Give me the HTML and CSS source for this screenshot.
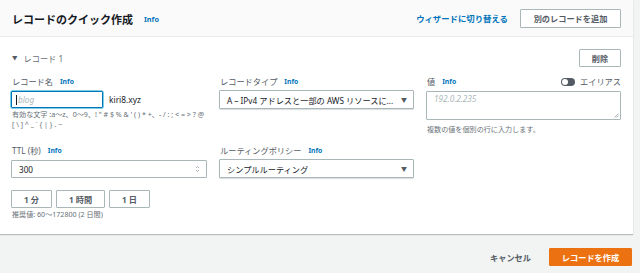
FILE: index.html
```html
<!DOCTYPE html>
<html lang="ja">
<head>
<meta charset="utf-8">
<link rel="stylesheet" href="styles.css">
</head>
<body>
<div class="card">
  <div class="card-header">
    <div class="title">レコードのクイック作成 <span class="info info-title">Info</span></div>
    <div class="header-actions">
      <span class="link">ウィザードに切り替える</span>
      <button class="btn btn-add">別のレコードを追加</button>
    </div>
  </div>
  <div class="card-body">
    <div class="rec-head">
      <span class="rec-title"><span class="caret">▼</span>レコード 1</span>
      <button class="btn btn-del">削除</button>
    </div>
    <div class="grid">
      <div class="field">
        <div class="label">レコード名 <span class="info">Info</span></div>
        <div class="name-row">
          <div class="input input-focus input-name"><span class="cursor"></span><span class="ph">blog</span></div>
          <span class="domain">kiri8.xyz</span>
        </div>
        <div class="help help-name">
          <div class="help-line">有効な文字 :a〜z、0〜9、! " # $ % &amp; ' ( ) * +、- / : ; &lt; = &gt; ? @</div>
          <div class="help-line">[ \ ] ^ _ ` { | } . ~</div>
        </div>
      </div>
      <div class="field">
        <div class="label">レコードタイプ <span class="info">Info</span></div>
        <div class="select"><span>A – IPv4 アドレスと一部の AWS リソースに...</span><span class="arrow">▼</span></div>
      </div>
      <div class="field">
        <div class="label label-split"><span class="lbl-inner">値 <span class="info">Info</span></span><span class="alias"><span class="toggle"><span class="knob"></span></span>エイリアス</span></div>
        <div class="textarea"><span class="ph">192.0.2.235</span>
          <svg class="grip" width="5" height="5" viewBox="0 0 5 5"><path d="M0.5 4.5 L4.5 0.5 M2.5 4.5 L4.5 2.5" stroke="#879596" stroke-width="0.7"/></svg>
        </div>
        <div class="help help-val">複数の値を個別の行に入力します。</div>
      </div>
      <div class="field">
        <div class="label">TTL (秒) <span class="info">Info</span></div>
        <div class="input input-ttl"><span>300</span>
          <span class="spin"><svg width="5" height="8" viewBox="0 0 5 8"><path d="M1 3 L2.5 1.5 L4 3 M1 5 L2.5 6.5 L4 5" fill="none" stroke="#879596" stroke-width="0.7"/></svg></span>
        </div>
        <div class="quick">
          <button class="btn btn-q btn-1m">1 分</button>
          <button class="btn btn-q btn-1h">1 時間</button>
          <button class="btn btn-q btn-1d">1 日</button>
        </div>
        <div class="help help-ttl">推奨値: 60〜172800 (2 日間)</div>
      </div>
      <div class="field">
        <div class="label">ルーティングポリシー <span class="info">Info</span></div>
        <div class="select"><span>シンプルルーティング</span><span class="arrow">▼</span></div>
      </div>
      <div class="field"></div>
    </div>
  </div>
</div>
<div class="footer">
  <span class="cancel">キャンセル</span>
  <button class="btn btn-primary">レコードを作成</button>
</div>
</body>
</html>
```

FILE: styles.css
```css
* { box-sizing: border-box; }
html, body { margin: 0; padding: 0; }
body {
  background: #f2f3f3;
  font-family: "Noto Sans", "Noto Sans CJK JP", sans-serif;
  color: #16191f;
  width: 640px;
  height: 273px;
  overflow: hidden;
}
.card {
  width: 633px;
  background: #fff;
  box-shadow: 0 1px 1px rgba(0, 28, 36, 0.25);
}
.card-header {
  height: 37px;
  background: #fafafa;
  border-bottom: 1px solid #eaeded;
  display: flex;
  align-items: center;
  justify-content: space-between;
  padding: 0 12px 0 12px;
}
.title {
  font-size: 11px;
  font-weight: 700;
  display: flex;
  align-items: center;
  gap: 11px;
  padding-top: 1px;
}
.info {
  color: #0073bb;
  font-size: 6.8px;
  font-weight: 700;
  font-family: "Noto Sans", sans-serif;
}
.info-title { font-size: 7.3px; }
.header-actions { display: flex; align-items: center; gap: 12px; }
.link { color: #0073bb; font-size: 8.4px; font-weight: 700; }
.btn {
  font-family: "Noto Sans", "Noto Sans CJK JP", sans-serif;
  background: #fff;
  border: 1px solid #aab7b8;
  border-radius: 1px;
  color: #545b64;
  font-weight: 700;
  font-size: 8.2px;
  padding: 0;
  display: inline-flex;
  align-items: center;
  justify-content: center;
}
.btn-add { width: 101px; height: 19px; }
.card-body { padding: 12px 12px 16px 11px; }
.rec-head {
  display: flex;
  justify-content: space-between;
  align-items: center;
  height: 18px;
}
.rec-title { color: #687078; font-size: 8.2px; display: flex; align-items: center; margin-left: 1px; }
.caret { font-size: 5.5px; color: #545b64; margin-right: 6px; }
.btn-del { width: 42px; height: 18px; }
.grid {
  display: grid;
  grid-template-columns: 196px 195px 195px;
  column-gap: 12px;
  row-gap: 13px;
  margin-top: 10px;
}
.field { display: flex; flex-direction: column; }
.label {
  font-size: 8.2px;
  color: #545b64;
  height: 10px;
  line-height: 10px;
  margin-bottom: 4px;
  margin-left: 1px;
  display: flex;
  align-items: center;
  gap: 7px;
}
.lbl-inner { display: flex; align-items: center; gap: 7px; }
.label-split { justify-content: space-between; }
.alias { display: flex; align-items: center; gap: 5px; color: #545b64; }
.toggle {
  width: 14px; height: 8px;
  border-radius: 4px;
  background: #545b64;
  position: relative;
  display: inline-block;
}
.knob {
  position: absolute;
  left: 1px; top: 1px;
  width: 6px; height: 6px;
  border-radius: 50%;
  background: #fff;
}
.name-row { display: flex; align-items: center; gap: 6px; }
.input {
  height: 17px;
  border: 1px solid #aab7b8;
  border-radius: 1px;
  font-size: 8.2px;
  display: flex;
  align-items: center;
  padding: 0 7px;
}
.input-name { width: 92px; }
.input-focus { border-color: #0073bb; box-shadow: 0 0 0 0.5px #00a1c9; padding-left: 4px; }
.cursor { width: 1px; height: 10px; background: #16191f; margin-right: 1px; }
.ph { color: #aab7b8; font-style: italic; }
.domain { font-size: 8.4px; color: #16191f; }
.help {
  font-size: 7.1px;
  color: #687078;
  line-height: 8px;
  margin-top: 4px;
  margin-left: 1px;
}
.help-name { display: flex; flex-direction: column; gap: 0; margin-top: 2px; }
.help-line { height: 9.5px; line-height: 9.5px; }
.select {
  height: 19px;
  margin-top: -1px;
  border: 1px solid #aab7b8;
  border-radius: 1px;
  box-shadow: 0 1px 1px rgba(0, 28, 36, 0.15);
  font-size: 8.2px;
  color: #16191f;
  display: flex;
  align-items: center;
  justify-content: space-between;
  padding: 0 6px 0 7px;
}
.arrow { font-size: 6px; color: #545b64; }
.textarea {
  height: 29px;
  border: 1px solid #aab7b8;
  border-radius: 1px;
  font-size: 8.2px;
  padding: 1px 7px;
  position: relative;
}
.grip { position: absolute; right: 1px; bottom: 1px; }
.help-val { margin-top: 5px; }
.input-ttl { height: 18px; justify-content: space-between; padding-right: 6px; color: #16191f; }
.spin { display: flex; }
.quick { display: flex; gap: 4px; margin-top: 12px; }
.btn-q { height: 18px; color: #545b64; font-size: 8.2px; }
.btn-1m { width: 41px; }
.btn-1h { width: 49px; }
.btn-1d { width: 41px; }
.help-ttl { margin-top: 2px; }
.footer {
  width: 633px;
  display: flex;
  justify-content: flex-end;
  align-items: center;
  gap: 18px;
  padding-top: 14px;
  padding-right: 1px;
}
.cancel { color: #545b64; font-size: 8.2px; font-weight: 700; }
.btn-primary {
  width: 83px; height: 18px;
  background: #ec7211;
  border-color: #ec7211;
  color: #fff;
  font-size: 8.2px;
}
```
